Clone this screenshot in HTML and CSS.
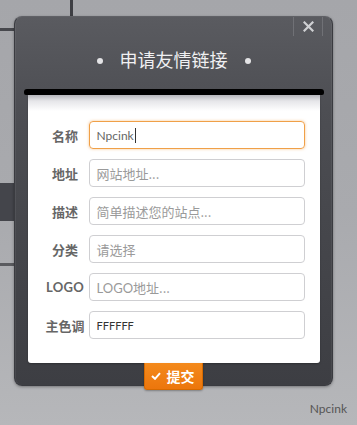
FILE: index.html
```html
<!DOCTYPE html>
<html lang="zh-CN">
<head>
<meta charset="utf-8">
<title>申请友情链接</title>
<link rel="stylesheet" href="styles.css">
</head>
<body>
<div class="dialog">
  <div class="dialog-top">
    <div class="close"><svg width="11" height="11" viewBox="0 0 11 11"><path d="M1.5 1.5L9.5 9.5M9.5 1.5L1.5 9.5" stroke="#cfd0d3" stroke-width="2.2" stroke-linecap="square"/></svg></div>
  </div>
  <div class="title"><span class="dot"></span><h1>申请友情链接</h1><span class="dot"></span></div>
  <div class="slot"></div>
  <div class="paper">
    <div class="form">
      <label class="lbl">名称</label><div class="field focus"><span class="val">Npcink</span><span class="caret"></span></div>
      <label class="lbl">地址</label><div class="field"><span class="ph">网站地址...</span></div>
      <label class="lbl">描述</label><div class="field"><span class="ph">简单描述您的站点...</span></div>
      <label class="lbl">分类</label><div class="field"><span class="ph">请选择</span></div>
      <label class="lbl latin">LOGO</label><div class="field"><span class="ph"><span class="latin-ph">LOGO</span>地址...</span></div>
      <label class="lbl">主色调</label><div class="field"><span class="val dark">FFFFFF</span></div>
    </div>
  </div>
  <div class="submit"><svg width="10" height="8" viewBox="0 0 10 8"><path d="M1 4L4 6.8L9 1.2" fill="none" stroke="#fff" stroke-width="2"/></svg><span>提交</span></div>
</div>
<div class="brand">Npcink</div>
</body>
</html>
```
FILE: styles.css
```css
html, body {
  margin: 0;
  padding: 0;
}
body {
  width: 357px;
  height: 425px;
  overflow: hidden;
  padding-top: 16px;
  box-sizing: border-box;
  font-family: "Liberation Sans", "Noto Sans CJK SC", sans-serif;
  background:
    linear-gradient(#3e3f44, #3e3f44) 70px 0 / 3px 16px no-repeat,
    linear-gradient(#47484d, #47484d) 0 28px / 14px 3px no-repeat,
    linear-gradient(#44454b, #44454b) 0 183px / 14px 38px no-repeat,
    linear-gradient(#5a5b5f, #5a5b5f) 0 263px / 14px 3px no-repeat,
    linear-gradient(#a5a6aa, #a9aaae 50%, #b6b7ba);
}
.dialog {
  margin-left: 14px;
  width: 319px;
  height: 370px;
  box-sizing: border-box;
  border-radius: 8px;
  border: 1px solid #3a3b40;
  border-top-color: #606166;
  background: linear-gradient(#5a5b60, #4d4e53 25%, #46474c 55%, #3d3e43);
  box-shadow: 0 1px 3px rgba(0,0,0,.35), inset 1px 0 0 rgba(255,255,255,.06), inset -1px 0 0 rgba(255,255,255,.06);
  display: flex;
  flex-direction: column;
  align-items: center;
}
.dialog > * {
  flex: none;
}
.dialog-top {
  align-self: stretch;
  height: 19px;
  display: flex;
  justify-content: flex-end;
  padding-right: 9px;
}
.close {
  width: 28px;
  height: 19px;
  border-left: 1px solid #707176;
  border-right: 1px solid #707176;
  display: flex;
  align-items: center;
  justify-content: center;
}
.title {
  height: 46px;
  margin-bottom: 7px;
  display: flex;
  align-items: center;
  gap: 17px;
}
.title h1 {
  margin: 0;
  font-size: 18px;
  font-weight: normal;
  color: #f0f0f2;
  font-family: "Noto Sans CJK SC", sans-serif;
  line-height: 24px;
}
.dot {
  width: 6px;
  height: 6px;
  border-radius: 50%;
  background: #e4e4e6;
  margin-top: 3px;
}
.slot {
  width: 300px;
  height: 6px;
  background: #000;
  border-radius: 3px 3px 2px 2px;
}
.paper {
  width: 292px;
  height: 268px;
  box-sizing: border-box;
  background: linear-gradient(#b4b5ba, #e6e6e9 6px, #fff 16px);
  box-shadow: 0 1px 2px rgba(0,0,0,.25);
  border-radius: 0 0 3px 3px;
  padding: 26px 15px 0 17px;
}
.form {
  display: grid;
  grid-template-columns: 41px 216px;
  column-gap: 3px;
  row-gap: 10px;
  align-items: center;
}
.lbl {
  text-align: center;
  font-weight: bold;
  font-size: 13px;
  color: #666;
  font-family: "Noto Sans CJK SC", sans-serif;
  white-space: nowrap;
  justify-self: center;
}
.lbl.latin {
  font-family: "Lato", sans-serif;
  font-size: 13px;
  letter-spacing: 0.3px;
}
.field {
  height: 28px;
  box-sizing: border-box;
  border: 1px solid #cfcfd2;
  border-radius: 4px;
  padding-left: 7px;
  display: flex;
  align-items: center;
  font-size: 13px;
}
.field.focus {
  border-color: #f0a048;
  box-shadow: 0 0 3px rgba(240,150,50,.55);
}
.ph {
  color: #9a9a9a;
  font-family: "Noto Sans CJK SC", sans-serif;
}
.latin-ph {
  font-family: "Lato", sans-serif;
}
.val {
  color: #666;
  font-family: "Lato", sans-serif;
  font-size: 12px;
}
.val.dark {
  color: #333;
  font-size: 11px;
}
.caret {
  width: 1px;
  height: 15px;
  background: #333;
  margin-left: 1px;
}
.submit {
  width: 59px;
  height: 27px;
  box-sizing: border-box;
  background: linear-gradient(#f48a1c, #ec760c);
  border: 1px solid #d66a00;
  border-top: none;
  border-radius: 0 0 3px 3px;
  box-shadow: 0 1px 2px rgba(0,0,0,.3);
  display: flex;
  align-items: center;
  justify-content: center;
  gap: 6px;
  color: #fff;
  font-weight: bold;
  font-size: 14px;
  font-family: "Noto Sans CJK SC", sans-serif;
  padding-right: 2px;
}
.brand {
  margin-top: 16px;
  text-align: right;
  padding-right: 10px;
  font-size: 12px;
  line-height: 14px;
  color: #555;
  font-family: "Lato", sans-serif;
}
```
